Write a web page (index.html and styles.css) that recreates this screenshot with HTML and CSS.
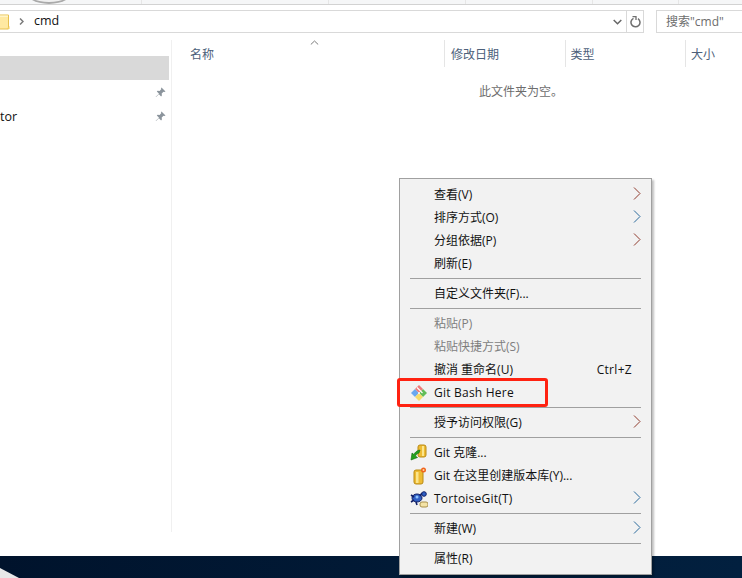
FILE: index.html
```html
<!DOCTYPE html>
<html lang="zh">
<head>
<meta charset="utf-8">
<title>cmd</title>
<link rel="stylesheet" href="styles.css">
</head>
<body>
<div class="window">
  <div class="ribbon">
    <span class="lens"></span>
    <i class="tick t1"></i><i class="tick t2"></i><i class="tick t3"></i><i class="tick t4"></i><i class="tick t5"></i>
  </div>
  <div class="navbar">
    <div class="address">
      <svg class="folder" width="10" height="16" viewBox="0 0 10 16"><path d="M-4 1h12.500v14H-4z" fill="#ffe9a1" stroke="#e6c04f"/><path d="M9.500 15H6.500l3-3z" fill="#f3cf63"/><path d="M-4 1.500h12v1.500H-4z" fill="#fff4c9"/></svg>
      <svg class="crumb" width="5" height="7" viewBox="0 0 5 7"><path d="M1 .5L4 3.500 1 6.500" fill="none" stroke="#7b7b7b" stroke-width="1.500"/></svg>
      <span class="path">cmd</span>
      <svg class="drop" width="9" height="6" viewBox="0 0 9 6"><path d="M.7 1l3.800 3.800L8.300 1" fill="none" stroke="#666" stroke-width="1.500"/></svg>
      <span class="refresh">
        <svg width="11" height="12" viewBox="0 0 11 12"><path d="M3.500 2.300A4.500 4.500 0 1 0 8 2.600" fill="none" stroke="#6f6f6f" stroke-width="1.500"/><path d="M2.500 .5h3.500v3.500" fill="none" stroke="#6f6f6f" stroke-width="1.300"/></svg>
      </span>
    </div>
    <div class="search">搜索"cmd"</div>
  </div>
  <div class="main">
    <aside class="sidebar">
      <div class="side-row selected"></div>
      <div class="side-row">
        <svg class="pin" width="11" height="11" viewBox="0 0 11 11"><path d="M6.500 .5l4 4-1.200.6-.8-.3-1.800 1.800.2 2-.8.8-2.200-2.200L1 10l-.3-.3 3.300-3-2.200-2.200.8-.8 2 .2L6.400 2.100l-.5-.9z" fill="#8b949c"/></svg>
      </div>
      <div class="side-row">
        <span class="side-label">tor</span>
        <svg class="pin" width="11" height="11" viewBox="0 0 11 11"><path d="M6.500 .5l4 4-1.200.6-.8-.3-1.800 1.800.2 2-.8.8-2.200-2.200L1 10l-.3-.3 3.300-3-2.200-2.200.8-.8 2 .2L6.400 2.100l-.5-.9z" fill="#8b949c"/></svg>
      </div>
    </aside>
    <section class="list">
      <div class="columns">
        <div class="col col-name">名称
          <svg class="sort" width="9" height="5" viewBox="0 0 9 5"><path d="M.8 4.500L4.500 1l3.700 3.500" fill="none" stroke="#7b7b7b"/></svg>
        </div>
        <div class="col col-date">修改日期</div>
        <div class="col col-type">类型</div>
        <div class="col col-size">大小</div>
      </div>
      <div class="empty">此文件夹为空。</div>
    </section>
  </div>
  <div class="desktop">
    <svg class="corner" width="20" height="10" viewBox="0 0 20 10"><path d="M0 0L19 10H0z" fill="#e8e8e8"/></svg>
  </div>
</div>

<div class="menu">
  <div class="item"><span class="label">查看(V)</span><svg class="arrow" width="8" height="13" viewBox="0 0 8 13"><path d="M1 .5l6 6-6 6" fill="none" stroke="#8f3a2c"/></svg></div>
  <div class="item"><span class="label">排序方式(O)</span><svg class="arrow" width="8" height="13" viewBox="0 0 8 13"><path d="M1 .5l6 6-6 6" fill="none" stroke="#2a6a9c"/></svg></div>
  <div class="item"><span class="label">分组依据(P)</span><svg class="arrow" width="8" height="13" viewBox="0 0 8 13"><path d="M1 .5l6 6-6 6" fill="none" stroke="#8f3a2c"/></svg></div>
  <div class="item"><span class="label">刷新(E)</span></div>
  <div class="sep"></div>
  <div class="item"><span class="label">自定义文件夹(F)...</span></div>
  <div class="sep"></div>
  <div class="item disabled"><span class="label">粘贴(P)</span></div>
  <div class="item disabled"><span class="label">粘贴快捷方式(S)</span></div>
  <div class="item"><span class="label">撤消 重命名(U)</span><span class="shortcut">Ctrl+Z</span></div>
  <div class="item">
    <svg class="icon" width="18" height="18" viewBox="0 0 18 18">
      <path d="M1 9l4-4 4 4-4 4z" fill="#6aa8f0"/>
      <path d="M9 9l4-4 4 4-4 4z" fill="#62bd58"/>
      <path d="M5 5l4-4 4 4-4 4z" fill="#ee7a7a"/>
      <path d="M5 13l4-4 4 4-4 4z" fill="#f6dc6a"/>
      <path d="M7 3.500l3.500 3.500M10.500 7l2 2" stroke="#fff" stroke-width="1.100"/>
      <path d="M7.800 9l1.200-1.200L10.200 9 9 10.200z" fill="#fff"/>
    </svg>
    <span class="label wide">Git Bash Here</span>
  </div>
  <div class="sep"></div>
  <div class="item"><span class="label">授予访问权限(G)</span><svg class="arrow" width="8" height="13" viewBox="0 0 8 13"><path d="M1 .5l6 6-6 6" fill="none" stroke="#8f3a2c"/></svg></div>
  <div class="sep"></div>
  <div class="item">
    <svg class="icon" width="18" height="18" viewBox="0 0 18 18">
      <rect x="8" y="1" width="8" height="12" rx="2" fill="#eebb33" stroke="#b98a14"/>
      <path d="M12 2h2v10h-2z" fill="#fbe58c"/>
      <path d="M1 16l1-7 2 1.500C5 8 7 6.500 10 6l-1 3c-2 .5-3 1.500-3.500 3l2 1.500z" fill="#23a11c" stroke="#0f6a0f" stroke-width=".6"/>
    </svg>
    <span class="label">Git 克隆...</span>
  </div>
  <div class="item">
    <svg class="icon" width="18" height="18" viewBox="0 0 18 18">
      <rect x="4" y="3" width="9" height="14" rx="2" fill="#eebb33" stroke="#b98a14"/>
      <path d="M6 5h2.500v11H6z" fill="#fbe58c"/>
      <circle cx="13.500" cy="3" r="2.500" fill="#f0641e"/>
      <circle cx="13.500" cy="3" r="1" fill="#ffd9a0"/>
    </svg>
    <span class="label">Git 在这里创建版本库(Y)...</span>
  </div>
  <div class="item">
    <svg class="icon" width="18" height="18" viewBox="0 0 18 18">
      <ellipse cx="7" cy="8" rx="5" ry="4" fill="#2f5fc4" stroke="#101f66"/>
      <path d="M1 5l3 2M1 12l3-2M12 3l-2 3M6 12l1 3" stroke="#101f66" stroke-width="1.600"/>
      <circle cx="14" cy="4" r="2.300" fill="#2f5fc4" stroke="#101f66"/>
      <circle cx="7" cy="7" r="1.500" fill="#8fc4ff"/>
      <rect x="10" y="12" width="8" height="5" rx="2" fill="#f4e3a6" stroke="#a88f4a"/>
    </svg>
    <span class="label wide">TortoiseGit(T)</span>
    <svg class="arrow" width="8" height="13" viewBox="0 0 8 13"><path d="M1 .5l6 6-6 6" fill="none" stroke="#2a6a9c"/></svg>
  </div>
  <div class="sep"></div>
  <div class="item"><span class="label">新建(W)</span><svg class="arrow" width="8" height="13" viewBox="0 0 8 13"><path d="M1 .5l6 6-6 6" fill="none" stroke="#2a6a9c"/></svg></div>
  <div class="sep"></div>
  <div class="item"><span class="label">属性(R)</span></div>
</div>
<div class="highlight"></div>
</body>
</html>
```
FILE: styles.css
```css
* { box-sizing: border-box; }
html, body { margin: 0; height: 100%; overflow: hidden; background: #fff; }
body { font-family: "Open Sans", "Noto Sans CJK SC", sans-serif; font-size: 12px; color: #1a1a1a; }
.window { width: 742px; height: 578px; display: flex; flex-direction: column; overflow: hidden; }

.ribbon { height: 5px; background: #f5f6f7; border-bottom: 1px solid #d2d2d2; position: relative; overflow: hidden; flex: none; }
.lens { position: absolute; left: 24px; top: -26px; width: 50px; height: 30px; border-radius: 50%; background: #f0f0f0; border-bottom: 2px solid #aaa; }
.tick { position: absolute; top: 0; width: 1px; height: 4px; background: #e6e6e6; }
.t1 { left: 141px; } .t2 { left: 328px; } .t3 { left: 465px; } .t4 { left: 592px; } .t5 { left: 678px; }

.navbar { flex: none; display: flex; margin-top: 5px; height: 23px; }
.address { width: 646px; flex: none; margin-left: -2px; border: 1px solid #d9d9d9; display: flex; align-items: center; background: #fff; }
.folder { margin-left: 1px; flex: none; }
.crumb { margin-left: 9px; flex: none; }
.path { margin-left: 10px; flex: 1; font-size: 12.500px; color: #111; line-height: 18px; margin-top: -2px; }
.drop { margin-right: 4px; flex: none; }
.refresh { width: 17px; height: 100%; border-left: 1px solid #d9d9d9; display: flex; align-items: center; justify-content: center; flex: none; }
.search { width: 100px; flex: none; margin-left: 12px; border: 1px solid #d9d9d9; border-right: 0; padding-left: 9px; line-height: 21px; color: #6d6d6d; }

.main { flex: 1; display: flex; min-height: 0; }
.sidebar { width: 172px; flex: none; padding-top: 23px; position: relative; }
.sidebar::after { content: ""; position: absolute; right: 0; top: 7px; height: 492px; width: 1px; background: #f0f0f0; }
.side-row { height: 24px; width: 169px; display: flex; align-items: center; justify-content: space-between; padding-right: 3px; }
.side-row .pin { margin-left: auto; }
.selected { background: #d9d9d9; }
.side-label { font-size: 12.500px; color: #111; }

.list { flex: 1; min-width: 0; }
.columns { display: flex; margin-top: 7px; height: 27px; color: #4c607a; line-height: 30px; }
.col { padding-left: 6px; position: relative; flex: none; }
.col-name { width: 272px; padding-left: 18px; }
.col-date, .col-type { width: 120.500px; border-left: 1px solid #e5e5e5; }
.col-type { padding-left: 5px; }
.col-size { flex: 1; border-left: 1px solid #e5e5e5; padding-left: 5px; }
.sort { position: absolute; left: 138px; top: 0; }
.empty { margin-top: 16px; margin-left: 307px; line-height: 17px; color: #6d6d6d; }

.desktop { height: 22px; flex: none; background: linear-gradient(90deg, #00132c, #02203f); position: relative; overflow: hidden; }
.corner { position: absolute; left: 0; bottom: 0; }

.menu { position: absolute; left: 399px; top: 178px; width: 253px; height: 397px; background: #f2f2f2; border: 1px solid #a0a0a0; box-shadow: 2px 2px 2px rgba(0,0,0,.25); padding: 4px 10px 3px 10px; color: #111; }
.item { height: 23px; display: flex; align-items: center; padding-left: 24px; position: relative; line-height: 23px; }
.label { white-space: nowrap; }
.wide { letter-spacing: .22px; }
.arrow { position: absolute; right: 0; top: 4px; }
.shortcut { position: absolute; right: 9px; top: 0; letter-spacing: .3px; }
.disabled { color: #7e7e7e; }
.icon { position: absolute; left: 0; top: 3px; }
.sep { height: 1px; margin: 3px 0; background: #a0a0a0; }

.highlight { position: absolute; left: 397px; top: 378px; width: 151px; height: 29px; border: 3px solid #f21; border-radius: 3px; }
```
